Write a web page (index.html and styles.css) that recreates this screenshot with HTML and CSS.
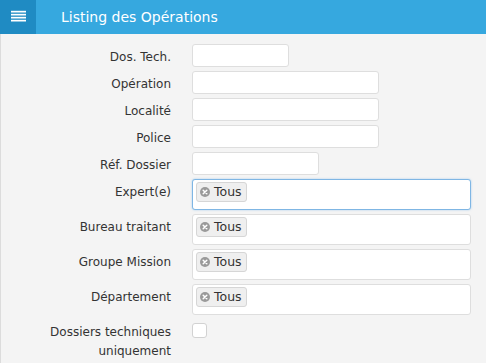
FILE: index.html
```html
<!DOCTYPE html>
<html lang="fr">
<head>
<meta charset="utf-8">
<title>Listing des Opérations</title>
<link rel="stylesheet" href="styles.css">
</head>
<body>
<header class="topbar">
  <div class="menu-btn">
    <svg width="36" height="34" viewBox="0 0 36 34"><rect x="11" y="10.8" width="15" height="1.7" fill="#fff"/><rect x="11" y="13.8" width="15" height="1.7" fill="#fff"/><rect x="11" y="16.8" width="15" height="1.7" fill="#fff"/><rect x="11" y="19.8" width="15" height="1.7" fill="#fff"/></svg>
  </div>
  <h1 class="title">Listing des Opérations</h1>
</header>
<main class="content">
  <form class="form">
    <label class="lbl">Dos. Tech.</label>
    <div class="field"><input class="inp w-sm" type="text"></div>

    <label class="lbl">Opération</label>
    <div class="field"><input class="inp w-lg" type="text"></div>

    <label class="lbl">Localité</label>
    <div class="field"><input class="inp w-lg" type="text"></div>

    <label class="lbl">Police</label>
    <div class="field"><input class="inp w-lg" type="text"></div>

    <label class="lbl">Réf. Dossier</label>
    <div class="field"><input class="inp w-md" type="text"></div>

    <label class="lbl">Expert(e)</label>
    <div class="field"><div class="multi focus"><span class="tag"><svg class="x" width="10" height="10" viewBox="0 0 10 10"><circle cx="5" cy="5" r="5" fill="#9a9a9a"/><path d="M3.2 3.2 L6.8 6.8 M6.8 3.2 L3.2 6.8" stroke="#fff" stroke-width="1.5" stroke-linecap="round"/></svg>Tous</span></div></div>

    <label class="lbl">Bureau traitant</label>
    <div class="field"><div class="multi"><span class="tag"><svg class="x" width="10" height="10" viewBox="0 0 10 10"><circle cx="5" cy="5" r="5" fill="#9a9a9a"/><path d="M3.2 3.2 L6.8 6.8 M6.8 3.2 L3.2 6.8" stroke="#fff" stroke-width="1.5" stroke-linecap="round"/></svg>Tous</span></div></div>

    <label class="lbl">Groupe Mission</label>
    <div class="field"><div class="multi"><span class="tag"><svg class="x" width="10" height="10" viewBox="0 0 10 10"><circle cx="5" cy="5" r="5" fill="#9a9a9a"/><path d="M3.2 3.2 L6.8 6.8 M6.8 3.2 L3.2 6.8" stroke="#fff" stroke-width="1.5" stroke-linecap="round"/></svg>Tous</span></div></div>

    <label class="lbl">Département</label>
    <div class="field"><div class="multi"><span class="tag"><svg class="x" width="10" height="10" viewBox="0 0 10 10"><circle cx="5" cy="5" r="5" fill="#9a9a9a"/><path d="M3.2 3.2 L6.8 6.8 M6.8 3.2 L3.2 6.8" stroke="#fff" stroke-width="1.5" stroke-linecap="round"/></svg>Tous</span></div></div>

    <label class="lbl lbl-cb">Dossiers techniques uniquement</label>
    <div class="field field-cb"><span class="cb"></span></div>
  </form>
</main>
</body>
</html>
```
FILE: styles.css
```css
* { box-sizing: border-box; }
html, body { margin: 0; padding: 0; height: 100%; }
body {
  font-family: "DejaVu Sans", Verdana, sans-serif;
  font-size: 12px;
  color: #333;
  background: #f4f4f4;
}
.topbar {
  display: flex;
  align-items: center;
  height: 34px;
  background: #36a8df;
}
.menu-btn {
  width: 36px;
  height: 34px;
  background: #1f8bc3;
}
.menu-btn svg { display: block; }
.title {
  margin: 0 0 0 25px;
  font-size: 14px;
  font-weight: normal;
  color: #fff;
  line-height: 34px;
}
.content {
  border-left: 1px solid #dcdcdc;
  min-height: calc(100% - 34px);
  padding-top: 10px;
}
.form {
  display: grid;
  grid-template-columns: 170px 1fr;
  column-gap: 21px;
  row-gap: 4px;
  align-items: start;
}
.lbl {
  text-align: right;
  line-height: 19px;
  padding-top: 3.5px;
}
.field { display: flex; }
.inp {
  height: 23px;
  border: 1px solid #dedede;
  border-radius: 3px;
  background: #fff;
  margin: 0;
  padding: 2px 6px;
  font: inherit;
  outline: none;
}
.w-sm { width: 97px; }
.w-md { width: 127px; }
.w-lg { width: 187px; }
.multi {
  width: 279px;
  height: 31px;
  border: 1px solid #dedede;
  border-radius: 3px;
  background: #fff;
  padding: 2px 3px;
  display: flex;
  align-items: flex-start;
}
.multi.focus {
  border-color: #7fb6e4;
  box-shadow: 0 0 2px rgba(102, 175, 233, 0.6);
}
.tag {
  display: inline-flex;
  align-items: center;
  height: 20px;
  width: 51px;
  padding: 0 0 0 3px;
  background: #efefef;
  border: 1px solid #d6d6d6;
  border-radius: 3px;
  line-height: 18px;
  color: #333;
  font-size: 12.5px;
}
.x { margin-right: 4px; flex: none; }
.field-cb { padding-top: 4px; }
.cb {
  display: block;
  width: 15px;
  height: 15px;
  border: 1px solid #d2d2d2;
  border-radius: 3px;
  background: #fff;
}
```
